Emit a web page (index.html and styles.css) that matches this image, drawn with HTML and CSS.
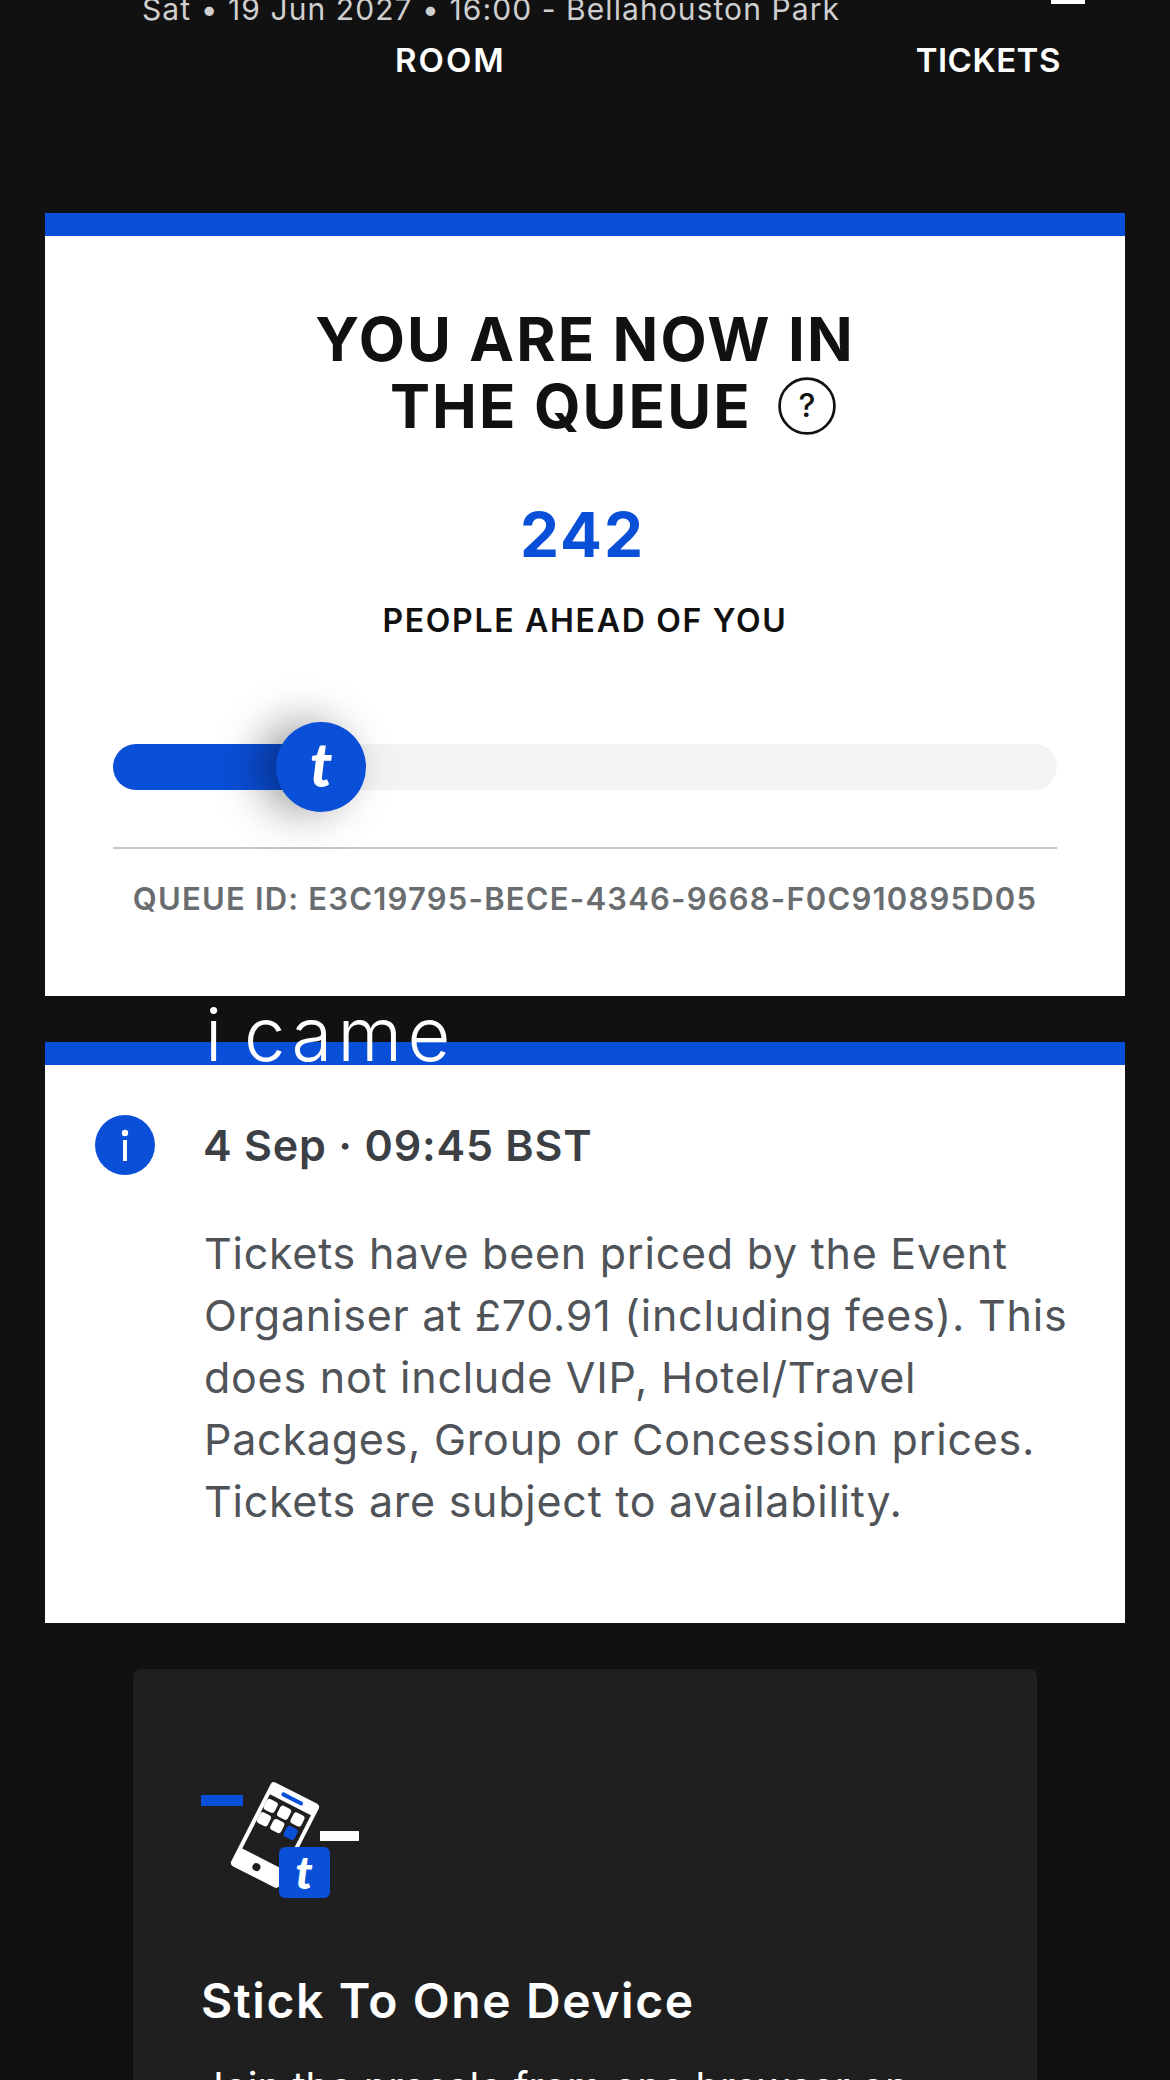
FILE: index.html
```html
<!DOCTYPE html>
<html lang="en">

<head>
    <meta charset="UTF-8">
    <title>Queue</title>
    <link rel="stylesheet" href="styles.css">
</head>

<body>
    <div class="page">
        <div class="event_line">
            <span>Sat • 19 Jun 2027 • 16:00 - Bellahouston Park</span>
            <span class="account_mark"></span>
        </div>
        <div class="tabs">
            <span class="tab_room">ROOM</span>
            <span class="tab_tickets">TICKETS</span>
        </div>

        <div class="card queue_card">
            <h1 class="queue_title">YOU ARE NOW IN<br>
                <span class="title_second">THE QUEUE
                    <svg class="help_icon" viewBox="0 0 56 56" aria-hidden="true">
                        <circle cx="28" cy="28" r="26.5" fill="none" stroke="#111" stroke-width="2.6"></circle>
                        <text x="28" y="39" text-anchor="middle" class="help_mark">?</text>
                    </svg>
                </span>
            </h1>
            <div class="queue_count">242</div>
            <div class="queue_label">PEOPLE AHEAD OF YOU</div>
            <div class="track">
                <div class="track_fill"></div>
                <div class="thumb">t</div>
            </div>
            <div class="queue_rule"></div>
            <div class="queue_id">QUEUE ID: E3C19795-BECE-4346-9668-F0C910895D05</div>
        </div>

        <div class="card note_card">
            <div class="note_head">
                <svg class="info_icon" viewBox="0 0 60 60" aria-hidden="true">
                    <circle cx="30" cy="30" r="30" fill="#0a4fd8"></circle>
                    <circle cx="30" cy="18" r="3.2" fill="#fff"></circle>
                    <rect x="28" y="25" width="4" height="21" fill="#fff"></rect>
                </svg>
                <span class="note_date">4 Sep · 09:45 BST</span>
            </div>
            <p class="note_text">Tickets have been priced by the Event<br>Organiser at £70.91 (including fees). This<br>does not include VIP, Hotel/Travel<br>Packages, Group or Concession prices.<br>Tickets are subject to availability.</p>
        </div>

        <div class="tip_card">
            <svg class="tip_icon" viewBox="0 0 240 160" aria-hidden="true">
                <rect x="41" y="35" width="42" height="11" fill="#0a4fd8"></rect>
                <rect x="160" y="71" width="39" height="10" fill="#fff"></rect>
                <g transform="rotate(27 115 75)">
                    <rect x="88" y="28" width="54" height="94" rx="4" fill="#fff"></rect>
                    <rect x="92" y="41" width="46" height="61" fill="#1f1f1f"></rect>
                    <rect x="102" y="33" width="24" height="4" rx="2" fill="#0a4fd8"></rect>
                    <rect x="92" y="45" width="12" height="12" rx="3" fill="#fff"></rect>
                    <rect x="107" y="45" width="12" height="12" rx="3" fill="#fff"></rect>
                    <rect x="122" y="45" width="12" height="12" rx="3" fill="#fff"></rect>
                    <rect x="92" y="60" width="12" height="12" rx="3" fill="#fff"></rect>
                    <rect x="107" y="60" width="12" height="12" rx="3" fill="#fff"></rect>
                    <rect x="122" y="60" width="12" height="12" rx="3" fill="#0a4fd8"></rect>
                    <circle cx="113" cy="112" r="4" fill="#1f1f1f"></circle>
                </g>
                <rect x="119" y="87" width="51" height="51" rx="6" fill="#0a4fd8"></rect>
                <text x="144" y="129" text-anchor="middle" class="tile_mark">t</text>
            </svg>
            <h2 class="tip_title">Stick To One Device</h2>
            <p class="tip_text">Join the presale from one browser on</p>
        </div>

        <div class="sticker">i came</div>
    </div>
</body>

</html>
```

FILE: styles.css
```css
* {
    box-sizing: border-box;
    margin: 0;
    padding: 0;
}

body {
    background: #111112;
    font-family: "Inter", "Liberation Sans", sans-serif;
    overflow: hidden;
}

.page {
    position: relative;
    height: 2080px;
    overflow: hidden;
    padding: 0 45px;
}

.event_line {
    display: flex;
    justify-content: space-between;
    margin-top: -13px;
    padding: 0 40px 0 97px;
    height: 43px;
    line-height: 44px;
    font-size: 30px;
    letter-spacing: 1.07px;
    color: #cfcfcf;
}

.account_mark {
    width: 34px;
    height: 17px;
    background: #fff;
}

.tabs {
    display: flex;
    height: 60px;
    line-height: 60px;
    font-size: 33px;
    font-weight: 600;
    letter-spacing: 0.5px;
    color: #fff;
}

.tab_room {
    margin-left: 350px;
    letter-spacing: 2px;
}

.tab_tickets {
    margin-left: 410px;
}

.card {
    background: #fff;
    border-top: 23px solid #0a4fd8;
}

.queue_card {
    margin-top: 123px;
    height: 783px;
    padding: 70px 68px 0;
    text-align: center;
}

.queue_title {
    font-size: 60px;
    line-height: 67px;
    font-weight: 700;
    letter-spacing: 2.1px;
    color: #111;
}

.title_second {
    display: inline-block;
    margin-left: 56px;
}

.help_icon {
    width: 58px;
    height: 58px;
    margin-left: 10px;
    vertical-align: -7px;
}

.help_mark {
    font-size: 31px;
    font-weight: 500;
    letter-spacing: 0;
    fill: #111;
}

.queue_count {
    margin-top: 59px;
    padding-right: 5px;
    font-size: 62px;
    line-height: 72px;
    font-weight: 700;
    color: #0a4fd8;
    letter-spacing: 2px;
}

.queue_label {
    margin-top: 28px;
    font-size: 32px;
    line-height: 44px;
    font-weight: 600;
    letter-spacing: 1.7px;
    color: #111;
}

.track {
    position: relative;
    height: 46px;
    margin-top: 101px;
    background: #f3f3f3;
    border-radius: 23px;
}

.track_fill {
    width: 220px;
    height: 46px;
    background: #0a4fd8;
    border-radius: 23px 0 0 23px;
}

.thumb {
    position: absolute;
    left: 163px;
    top: -22px;
    width: 90px;
    height: 90px;
    border-radius: 50%;
    background: #0a4fd8;
    box-shadow: -18px 0 44px rgba(0, 0, 0, 0.38);
    color: #fff;
    font-family: "Lato", sans-serif;
    font-size: 60px;
    line-height: 84px;
    font-weight: 900;
    font-style: italic;
}

.queue_rule {
    height: 2px;
    margin-top: 57px;
    background: #c8c8c8;
}

.queue_id {
    margin: 28px -10px 0;
    font-size: 31px;
    line-height: 44px;
    font-weight: 600;
    letter-spacing: 1.2px;
    color: #6a6d70;
    white-space: nowrap;
}

.note_card {
    margin-top: 46px;
    height: 581px;
    padding: 50px 50px 0;
}

.note_head {
    display: flex;
    align-items: center;
    gap: 48px;
}

.info_icon {
    width: 60px;
    height: 60px;
    flex: none;
}

.note_date {
    font-size: 43px;
    font-weight: 600;
    letter-spacing: 0.8px;
    color: #3c4045;
}

.note_text {
    margin: 47px 0 0 109px;
    font-size: 43px;
    line-height: 62px;
    letter-spacing: 0.75px;
    color: #505459;
    white-space: nowrap;
}

.tip_card {
    margin: 46px 88px 0;
    height: 500px;
    padding: 91px 68px 0;
    background: #1f1f1f;
    border-radius: 8px;
}

.tip_icon {
    display: block;
    width: 240px;
    height: 160px;
    margin-left: -41px;
    margin-bottom: 53px;
}

.tile_mark {
    font-family: "Lato", sans-serif;
    font-size: 46px;
    font-weight: 900;
    font-style: italic;
    fill: #fff;
}

.tip_title {
    font-size: 48px;
    line-height: 56px;
    font-weight: 600;
    letter-spacing: 1.6px;
    color: #fff;
}

.tip_text {
    margin-top: 30px;
    font-size: 40px;
    line-height: 56px;
    color: #fff;
    white-space: nowrap;
}

.sticker {
    position: absolute;
    left: 205px;
    top: 991px;
    font-size: 74px;
    line-height: 86px;
    font-weight: 300;
    letter-spacing: 5.4px;
    word-spacing: -10px;
    color: #fff;
}
```
